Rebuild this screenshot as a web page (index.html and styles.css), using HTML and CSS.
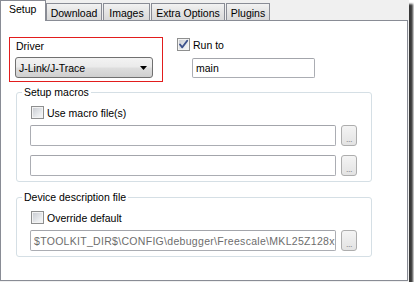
FILE: index.html
```html
<!DOCTYPE html>
<html>
<head>
<meta charset="utf-8">
<link rel="stylesheet" href="styles.css">
</head>
<body>
<div class="window">
  <div class="tabs">
    <div class="tab active">Setup</div>
    <div class="tab tab-download">Download</div>
    <div class="tab tab-images">Images</div>
    <div class="tab tab-extra">Extra Options</div>
    <div class="tab tab-plugins">Plugins</div>
  </div>
  <div class="panel">
    <div class="top-row">
      <div class="driver-box">
        <div class="field-label">Driver</div>
        <div class="select">
          <span>J-Link/J-Trace</span>
          <svg class="arrow" width="7" height="4" viewBox="0 0 7 4"><path d="M0 0 H7 L3.5 4 Z" fill="#000"/></svg>
        </div>
      </div>
      <div class="runto">
        <div class="check">
          <span class="box">
            <svg width="11" height="11" viewBox="0 0 11 11"><path d="M2 5.5 L4.3 8.3 L9.2 1.8" fill="none" stroke="#3d528c" stroke-width="1.9" stroke-linecap="round" stroke-linejoin="round"/></svg>
          </span>
          <span>Run to</span>
        </div>
        <div class="input input-main">main</div>
      </div>
    </div>

    <fieldset class="group group-macros">
      <legend>Setup macros</legend>
      <div class="check"><span class="box"></span><span>Use macro file(s)</span></div>
      <div class="file-row first">
        <div class="input input-file"></div>
        <div class="browse">...</div>
      </div>
      <div class="file-row">
        <div class="input input-file"></div>
        <div class="browse">...</div>
      </div>
    </fieldset>

    <fieldset class="group group-device">
      <legend>Device description file</legend>
      <div class="check"><span class="box"></span><span>Override default</span></div>
      <div class="file-row first">
        <div class="input input-file disabled"><span class="path">$TOOLKIT_DIR$\CONFIG\debugger\Freescale\MKL25Z128x</span></div>
        <div class="browse">...</div>
      </div>
    </fieldset>
  </div>
</div>
</body>
</html>
```

FILE: styles.css
```css
html, body {
  margin: 0;
  padding: 0;
  background: #ffffff;
}

body {
  font-family: "Liberation Sans", Arial, sans-serif;
  font-size: 10.5px;
  line-height: 12px;
  color: #000;
}

.window {
  width: 409px;
  height: 282px;
  background: #f0f0f0;
  box-shadow: 4px 4px 2px 0 rgba(35, 35, 35, 0.9);
  display: flex;
  flex-direction: column;
}

/* ---------- tabs ---------- */
.tabs {
  display: flex;
  align-items: flex-end;
  height: 20px;
  flex: none;
}

.tab {
  box-sizing: border-box;
  height: 17px;
  border: 1px solid #898c95;
  border-bottom: none;
  background: linear-gradient(#f2f2f2, #e4e4e4 50%, #d9d9d9);
  padding: 3px 0 0;
  text-align: center;
  white-space: nowrap;
  margin-left: 1px;
}

.tab.active {
  height: 21px;
  width: 46px;
  margin-left: 0;
  margin-bottom: -1px;
  background: #ffffff;
  padding: 2px 0 0 8px;
  text-align: left;
  position: relative;
  z-index: 1;
}

.tab-download { width: 56px; margin-left: 0; }
.tab-images { width: 47px; }
.tab-extra { width: 74px; }
.tab-plugins { width: 44px; }

/* ---------- panel ---------- */
.panel {
  flex: 1;
  margin: 0 1px 1px 0;
  border: 1px solid #898c95;
  background: #ffffff;
}

.top-row {
  display: flex;
  align-items: flex-start;
  margin: 16px 0 0 8px;
}

.driver-box {
  box-sizing: border-box;
  width: 154px;
  height: 45px;
  border: 1px solid #e21d1d;
  padding: 2px 0 0 6px;
}

.field-label {
  height: 12px;
}

.select {
  box-sizing: border-box;
  width: 138px;
  height: 21px;
  margin: 5px 0 0 -1px;
  border: 1px solid #707070;
  border-radius: 3px;
  background: linear-gradient(#f3f3f3, #ebebeb 45%, #dddddd 55%, #cfcfcf);
  display: flex;
  align-items: center;
  justify-content: space-between;
  padding: 1px 5px 0 3px;
}

.select .arrow {
  display: block;
}

.runto {
  margin: 1px 0 0 14px;
}

.check {
  display: flex;
  align-items: center;
  gap: 3px;
  height: 13px;
}

.box {
  box-sizing: border-box;
  width: 13px;
  height: 13px;
  border: 1px solid #8e8f8f;
  background: linear-gradient(135deg, #c6c9cf, #eceef0 70%, #f7f7f7);
  box-shadow: inset 0 0 0 1px #f3f3f3;
  display: flex;
  align-items: center;
  justify-content: center;
  flex: none;
}

.input {
  box-sizing: border-box;
  border: 1px solid #abadb3;
  border-top-color: #a3a5ab;
  border-radius: 2px;
  background: #fff;
  height: 21px;
  padding: 4px 3px 0;
  white-space: nowrap;
  overflow: hidden;
}

.input-main {
  width: 123px;
  height: 20px;
  margin: 7px 0 0 15px;
  padding-top: 3px;
}

/* ---------- group boxes ---------- */
.group {
  margin: 4px 0 0 15px;
  width: 356px;
  box-sizing: border-box;
  border: 1px solid #d5dfe5;
  border-radius: 3px;
  padding: 0 0 5px 13px;
  min-inline-size: 0;
}

.group legend {
  margin-left: -8px;
  padding: 0 2px;
  line-height: 12px;
}

.group .check {
  margin: 8px 0 0 1px;
}

.group-device {
  margin-top: 9px;
}

.file-row {
  display: flex;
  gap: 5px;
  margin-top: 9px;
}

.file-row.first {
  margin-top: 6px;
}

.input-file {
  width: 306px;
  flex: none;
}

.input.disabled {
  color: #6d6d6d;
  padding-left: 3px;
}

.path {
  letter-spacing: 0.3px;
}

.browse {
  box-sizing: border-box;
  width: 16px;
  height: 21px;
  flex: none;
  border: 1px solid #adadad;
  border-radius: 3px;
  background: linear-gradient(#f4f4f4, #ebebeb 50%, #e3e3e3);
  color: #8a8a8a;
  font-size: 9px;
  line-height: 9px;
  text-align: center;
  padding-top: 9px;
  letter-spacing: -0.5px;
}
```
